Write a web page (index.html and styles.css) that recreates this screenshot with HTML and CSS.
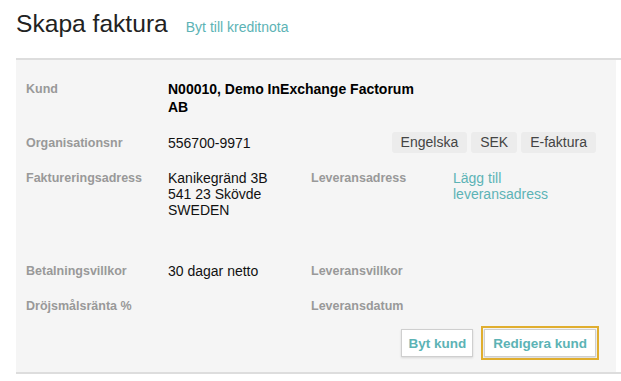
FILE: index.html
```html
<!DOCTYPE html>
<html lang="sv">

<head>
    <meta charset="UTF-8" />
    <meta name="viewport" content="width=device-width, initial-scale=1" />
    <title>Skapa faktura</title>
    <link rel="stylesheet" href="styles.css">
</head>

<body>
    <div class="page-header">
        <h1>Skapa faktura</h1>
        <a href="#" class="switch-link">Byt till kreditnota</a>
    </div>

    <div class="card">
        <div class="card-body">
            <div class="row row-kund">
                <div class="label">Kund</div>
                <div class="value customer-name">N00010, Demo InExchange Factorum AB</div>
            </div>

            <div class="row row-org">
                <div class="label">Organisationsnr</div>
                <div class="value">556700-9971</div>
                <div class="tags">
                    <span class="tag">Engelska</span>
                    <span class="tag">SEK</span>
                    <span class="tag">E-faktura</span>
                </div>
            </div>

            <div class="row row-address">
                <div class="label">Faktureringsadress</div>
                <div class="value">Kanikegränd 3B<br>541 23 Skövde<br>SWEDEN</div>
                <div class="label">Leveransadress</div>
                <div class="value"><a href="#" class="link">Lägg till leveransadress</a></div>
            </div>

            <div class="row row-terms">
                <div class="label">Betalningsvillkor</div>
                <div class="value">30 dagar netto</div>
                <div class="label">Leveransvillkor</div>
                <div class="value"></div>
            </div>

            <div class="row row-interest">
                <div class="label">Dröjsmålsränta %</div>
                <div class="value"></div>
                <div class="label">Leveransdatum</div>
                <div class="value"></div>
            </div>

            <div class="actions">
                <button type="button" class="btn">Byt kund</button>
                <button type="button" class="btn btn-focus">Redigera kund</button>
            </div>
        </div>
    </div>
</body>

</html>
```

FILE: styles.css
```css
body {
    font-family: "Liberation Sans", Arial, sans-serif;
    margin: 0;
    padding: 10px 0 0 16px;
    background-color: #fff;
    color: #111;
}

a {
    text-decoration: none;
}

.page-header {
    display: flex;
    align-items: baseline;
    gap: 18px;
    margin-bottom: 20px;
}

h1 {
    margin: 0;
    font-size: 24.6px;
    font-weight: normal;
    line-height: 28px;
    color: #222;
}

.switch-link {
    font-size: 14px;
    color: #5cb3b5;
}

.card {
    border-top: 2px solid #dddddd;
    border-bottom: 2px solid #dddddd;
}

.card-body {
    margin-right: 5px;
    padding: 20px 20px 15px 10px;
    background-color: #f5f5f5;
}

.row {
    display: grid;
    grid-template-columns: 142px 143px 142px minmax(0, 1fr);
    align-items: start;
    font-size: 14px;
    line-height: 18px;
}

.label {
    font-size: 12.5px;
    font-weight: bold;
    color: #999;
}

.value {
    color: #111;
}

.customer-name {
    grid-column: span 2;
    max-width: 255px;
    font-weight: bold;
    color: #000;
}

.row-org {
    margin-top: 16px;
    align-items: center;
}

.tags {
    grid-column: span 2;
    display: flex;
    justify-content: flex-end;
    gap: 4px;
}

.tag {
    padding: 2px 9px;
    font-size: 14px;
    line-height: 17px;
    color: #444;
    background-color: #ececec;
    border-radius: 3px;
}

.row-address {
    margin-top: 17px;
    line-height: 16px;
}

.link {
    color: #5cb3b5;
}

.row-terms {
    margin-top: 44px;
}

.row-interest {
    margin-top: 17px;
}

.actions {
    display: flex;
    justify-content: flex-end;
    gap: 11px;
    margin-top: 14px;
}

.btn {
    height: 28px;
    padding: 0 6px;
    font-family: "Liberation Sans", Arial, sans-serif;
    font-size: 13.5px;
    font-weight: bold;
    color: #5cb3b5;
    background-color: #fff;
    border: 1px solid #cfcfcf;
    border-radius: 0;
    box-shadow: 0 1px 2px rgba(0, 0, 0, 0.12);
    cursor: pointer;
}

.btn-focus {
    padding: 0 8px;
    outline: 2px solid #e0ae2f;
    outline-offset: 1px;
}
```
